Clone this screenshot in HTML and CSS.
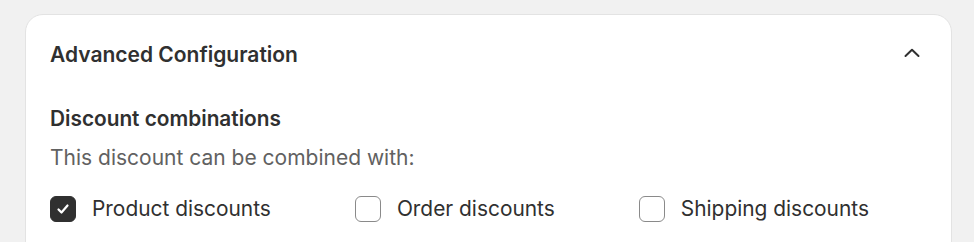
FILE: index.html
```html
<!DOCTYPE html>
<html>
<head>
<meta charset="utf-8">
<link rel="stylesheet" href="styles.css">
</head>
<body>
<div class="page">
  <section class="card">
    <div class="card-head">
      <h2 class="title">Advanced Configuration</h2>
      <button class="toggle" aria-label="Collapse">
        <svg width="16" height="10" viewBox="0 0 16 10"><path d="M1.5 8 L8 1.8 L14.5 8" fill="none" stroke="#303030" stroke-width="2" stroke-linecap="round" stroke-linejoin="round"/></svg>
      </button>
    </div>
    <h3 class="subtitle">Discount combinations</h3>
    <p class="desc">This discount can be combined with:</p>
    <div class="options">
      <label class="opt">
        <span class="box checked">
          <svg width="14" height="12" viewBox="0 0 14 12"><path d="M2.5 6.5 L5.5 9.5 L11.5 2.5" fill="none" stroke="#fff" stroke-width="2.2" stroke-linecap="round" stroke-linejoin="round"/></svg>
        </span>
        <span class="lbl">Product discounts</span>
      </label>
      <label class="opt">
        <span class="box"></span>
        <span class="lbl">Order discounts</span>
      </label>
      <label class="opt">
        <span class="box"></span>
        <span class="lbl">Shipping discounts</span>
      </label>
    </div>
  </section>
</div>
</body>
</html>
```

FILE: styles.css
```css
html, body {
  margin: 0;
  padding: 0;
  background: #f1f1f1;
  height: 100%;
  overflow: hidden;
}
body {
  font-family: Inter, "Noto Sans", sans-serif;
  color: #303030;
}
.page {
  padding: 14px 22px 0 25px;
}
.card {
  background: #fff;
  border: 1px solid #e3e3e3;
  border-radius: 18px;
  padding: 26px 25px 40px 24px;
  height: 400px;
}
.card-head {
  display: flex;
  align-items: center;
  justify-content: space-between;
}
.title {
  margin: 0;
  font-size: 21px;
  line-height: 28px;
  font-weight: 600;
}
.toggle {
  background: none;
  border: 0;
  padding: 0;
  margin-right: 2px;
  display: flex;
  align-items: center;
  justify-content: center;
  width: 24px;
  height: 24px;
  margin-top: -5px;
}
.subtitle {
  margin: 36px 0 0;
  font-size: 20.8px;
  line-height: 28px;
  font-weight: 600;
}
.desc {
  margin: 11px 0 0;
  font-size: 21px;
  line-height: 28px;
  color: #616161;
}
.options {
  display: flex;
  gap: 84px;
  margin-top: 23px;
}
.opt {
  display: flex;
  align-items: center;
  gap: 16px;
}
.box {
  box-sizing: border-box;
  width: 26px;
  height: 26px;
  border: 1.5px solid #8a8a8a;
  border-radius: 6px;
  display: flex;
  align-items: center;
  justify-content: center;
  background: #fff;
}
.box.checked {
  background: #303030;
  border-color: #303030;
}
.lbl {
  font-size: 20.9px;
  line-height: 28px;
}
```
